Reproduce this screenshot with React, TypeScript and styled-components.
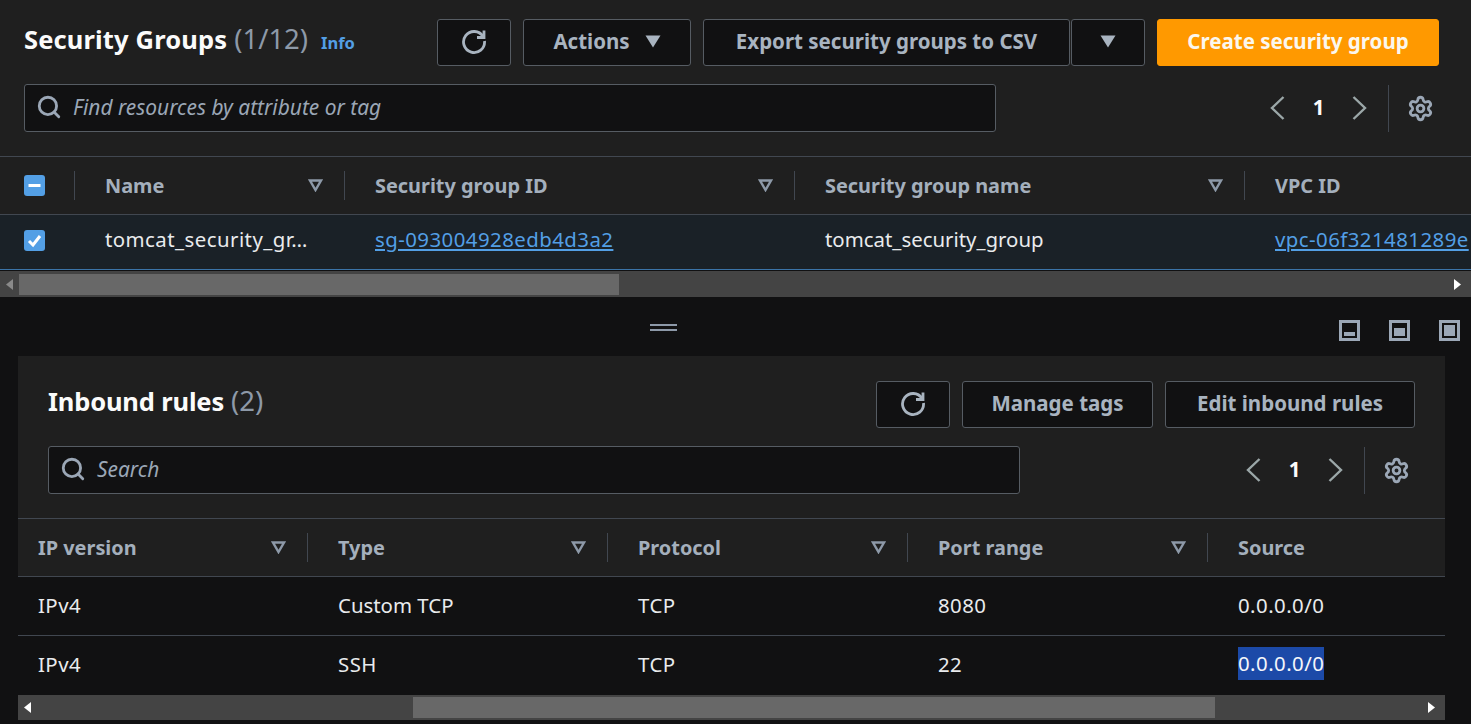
import React from 'react'
import styled, { createGlobalStyle } from 'styled-components'
import { Search, Settings } from 'lucide-react'

const GlobalStyle = createGlobalStyle`
  html, body {
    margin: 0;
    padding: 0;
    background: #111112;
    font-family: "Noto Sans", "Open Sans", sans-serif;
  }
  * { box-sizing: border-box; }
`

const Page = styled.div`
  width: 1471px;
  height: 724px;
  overflow: hidden;
  background: #111112;
`

const HeaderPanel = styled.div<{ $pad: number }>`
  background: #1f1f1f;
  padding: ${(p) => (p.$pad === 24 ? '19px 32px 24px 24px' : '25px 30px 24px 30px')};
`

const TitleRow = styled.div`
  display: flex;
  align-items: center;
  height: 47px;
`

const Title = styled.h1<{ $track: number }>`
  margin: 0 0 8px;
  font-size: 25.5px;
  line-height: 32px;
  font-weight: 700;
  letter-spacing: ${(p) => p.$track}px;
  color: #fbfbfb;
  white-space: nowrap;
`

const Count = styled.span`
  font-size: 27.5px;
  font-weight: 400;
  letter-spacing: 0;
  color: #8d99a8;
  margin-left: 7px;
`

const InfoLink = styled.a`
  margin-left: 13px;
  margin-bottom: 1px;
  font-size: 16.5px;
  font-weight: 700;
  color: #539fe5;
`

const Actions = styled.div`
  margin-left: auto;
  display: flex;
  align-items: center;
  gap: 12px;
`

const Button = styled.button<{ $w: number }>`
  width: ${(p) => p.$w}px;
  height: 47px;
  display: flex;
  align-items: center;
  justify-content: center;
  gap: 15px;
  background: #111112;
  border: 1px solid #565c63;
  border-radius: 3px;
  color: #a9b4c0;
  font-family: inherit;
  font-size: 20.5px;
  font-weight: 700;
  padding: 0 0 3px;
`

const PrimaryButton = styled(Button)`
  background: #ff9900;
  border-color: #ff9900;
  color: #fbf7ee;
`

const SplitGroup = styled.div`
  display: flex;
  gap: 1px;
`

const FilterRow = styled.div`
  display: flex;
  align-items: center;
  margin-top: 18px;
  height: 48px;
`

const SearchBox = styled.div`
  width: 972px;
  height: 48px;
  display: flex;
  align-items: center;
  gap: 11px;
  padding: 0 0 2px 11px;
  background: #111112;
  border: 1px solid #565c63;
  border-radius: 3px;
  color: #9ba7b6;
  font-size: 20.9px;
  font-style: italic;
`

const Pager = styled.div`
  margin-left: auto;
  display: flex;
  align-items: center;
  height: 47px;
`

const PageNumber = styled.span`
  width: 55px;
  padding-bottom: 3px;
  text-align: center;
  color: #fbfbfb;
  font-size: 20.5px;
  font-weight: 700;
`

const PagerArrow = styled.svg`
  width: 28px;
  height: 28px;
  fill: none;
  stroke: #9ba7a8;
  stroke-width: 2.4;
`

const PagerDivider = styled.div`
  width: 1px;
  height: 47px;
  background: #414750;
  margin: 0 18px 0 14px;
`

const GearWrap = styled.span`
  display: flex;
  color: #9ba7b6;
  margin-right: 5px;
`

const Row = styled.div<{ $h: number; $bg: string; $under?: string; $lift?: number }>`
  display: flex;
  align-items: center;
  height: ${(p) => p.$h}px;
  background: ${(p) => p.$bg};
  border-top: 1px solid #414750;
  border-bottom: ${(p) => (p.$under ? `1px solid ${p.$under}` : 'none')};
  padding-bottom: ${(p) => p.$lift ?? 0}px;
  overflow: hidden;
`

const Cell = styled.div<{ $w: number; $pad?: number; $wide?: boolean }>`
  flex: 0 0 ${(p) => p.$w}px;
  display: flex;
  align-items: center;
  padding-left: ${(p) => p.$pad ?? 30}px;
  height: 100%;
  font-size: 20.4px;
  letter-spacing: ${(p) => (p.$wide ? '0.45px' : '0')};
  color: #e9ebed;
  white-space: nowrap;
`

const HeadCell = styled(Cell)`
  position: relative;
  color: #a4afbc;
  font-size: 19.9px;
  font-weight: 700;
  padding-right: 22px;
  justify-content: space-between;
  &::after {
    content: '';
    position: absolute;
    right: 0;
    top: 14px;
    bottom: 14px;
    width: 1px;
    background: #414750;
  }
`

const LastHeadCell = styled(Cell)`
  color: #a4afbc;
  font-size: 19.9px;
  font-weight: 700;
`

const TableLink = styled.a`
  color: #539fe5;
  text-decoration: underline;
`

const Highlight = styled.span`
  background: #1c4aa8;
  color: #f4f6fb;
  line-height: 33px;
`

const CheckBox = styled.span<{ $drop?: number }>`
  width: 21px;
  height: 21px;
  display: flex;
  align-items: center;
  justify-content: center;
  margin-top: ${(p) => p.$drop ?? 0}px;
  background: #539fe5;
  border-radius: 3px;
`

const Scrollbar = styled.div<{ $h: number; $gap?: number }>`
  display: flex;
  height: ${(p) => p.$h}px;
  margin-top: ${(p) => p.$gap ?? 0}px;
  background: #444444;
  align-items: center;
`

const Thumb = styled.div<{ $w: number; $ml: number }>`
  width: ${(p) => p.$w}px;
  height: 21px;
  margin-left: ${(p) => p.$ml}px;
  background: #686868;
`

const ScrollArrow = styled.span<{ $dim?: boolean }>`
  display: flex;
  width: 19px;
  justify-content: center;
  color: ${(p) => (p.$dim ? '#8a8a8a' : '#ffffff')};
`

const ScrollEnd = styled.span`
  display: flex;
  margin-left: auto;
  width: 27px;
  justify-content: center;
`

const SplitBar = styled.div`
  display: flex;
  align-items: center;
  height: 59px;
  padding: 0 11px 0 650px;
`

const Handle = styled.div`
  width: 27px;
  height: 7px;
  margin-top: 2px;
  border-top: 2px solid #8d99a8;
  border-bottom: 2px solid #8d99a8;
`

const SplitIcons = styled.div`
  margin-left: auto;
  display: flex;
  gap: 29px;
  margin-top: 8px;
`

const SplitIcon = styled.span<{ $fill: number }>`
  display: flex;
  align-items: flex-end;
  width: 21px;
  height: 21px;
  border: 3px solid #9ba7b6;
  background: #111112;
  padding: 2px;
  & > i {
    display: block;
    width: 100%;
    height: ${(p) => p.$fill}%;
    background: #9ba7b6;
  }
`

const DetailPanel = styled.div`
  width: 1427px;
  margin-left: 18px;
`

const Refresh = () => (
  <svg width="28" height="28" viewBox="0 0 28 28" fill="none" stroke="#a9b4c0" strokeWidth="2.8">
    <path d="M23 9.500A10.500 10.500 0 1 0 24.500 14" />
    <path d="M24 3.500v7h-7" />
  </svg>
)

const Caret = () => (
  <svg width="16" height="13" viewBox="0 0 16 13">
    <path d="M0.500 0.500h15L8 12.500z" fill="#a9b4c0" />
  </svg>
)

const SortIcon = () => (
  <svg width="15" height="13" viewBox="0 0 15 13" fill="none" stroke="#8d99a8" strokeWidth="2.4">
    <path d="M2 1.500h11L7.500 11z" />
  </svg>
)

const SmallArrow = ({ dir }: { dir: 'left' | 'right' }) => (
  <svg width="7" height="11" viewBox="0 0 7 11" fill="currentColor">
    <path d={dir === 'left' ? 'M7 0v11L0 5.500z' : 'M0 0v11l7-5.500z'} />
  </svg>
)

function PagerBlock() {
  return (
    <Pager>
      <PagerArrow viewBox="0 0 28 28"><path d="M20.500 3L9 14l11.500 11" /></PagerArrow>
      <PageNumber>1</PageNumber>
      <PagerArrow viewBox="0 0 28 28"><path d="M7.500 3L19 14 7.500 25" /></PagerArrow>
      <PagerDivider />
      <GearWrap><Settings size={27} strokeWidth={2.5} /></GearWrap>
    </Pager>
  )
}

export default function App() {
  return (
    <Page>
      <GlobalStyle />
      <HeaderPanel $pad={24}>
        <TitleRow>
          <Title $track={0.14}>Security Groups<Count>(1/12)</Count></Title>
          <InfoLink>Info</InfoLink>
          <Actions>
            <Button $w={74}><Refresh /></Button>
            <Button $w={168}>Actions <Caret /></Button>
            <SplitGroup>
              <Button $w={367}>Export security groups to CSV</Button>
              <Button $w={74}><Caret /></Button>
            </SplitGroup>
            <PrimaryButton $w={282}>Create security group</PrimaryButton>
          </Actions>
        </TitleRow>
        <FilterRow>
          <SearchBox>
            <Search size={26} strokeWidth={2.6} />
            Find resources by attribute or tag
          </SearchBox>
          <PagerBlock />
        </FilterRow>
      </HeaderPanel>

      <Row $h={58} $bg="#1f1f1f">
        <HeadCell $w={75} $pad={24}>
          <CheckBox>
            <svg width="15" height="15" viewBox="0 0 15 15"><path d="M1.500 7.500h12" stroke="#fff" strokeWidth="3" /></svg>
          </CheckBox>
        </HeadCell>
        <HeadCell $w={270}>Name <SortIcon /></HeadCell>
        <HeadCell $w={450}>Security group ID <SortIcon /></HeadCell>
        <HeadCell $w={450}>Security group name <SortIcon /></HeadCell>
        <LastHeadCell $w={226}>VPC ID</LastHeadCell>
      </Row>
      <Row $h={56} $bg="#1a2127" $under="#3b74a8" $lift={7}>
        <Cell $w={75} $pad={24}>
          <CheckBox $drop={4}>
            <svg width="17" height="17" viewBox="0 0 17 17" fill="none"><path d="M3 9l4 4 7-9" stroke="#fff" strokeWidth="3" /></svg>
          </CheckBox>
        </Cell>
        <Cell $w={270} $wide>tomcat_security_gr…</Cell>
        <Cell $w={450} $wide><TableLink>sg-093004928edb4d3a2</TableLink></Cell>
        <Cell $w={450}>tomcat_security_group</Cell>
        <Cell $w={226} $wide><TableLink>vpc-06f321481289e</TableLink></Cell>
      </Row>
      <Scrollbar $h={26} $gap={1}>
        <ScrollArrow $dim><SmallArrow dir="left" /></ScrollArrow>
        <Thumb $w={600} $ml={0} />
        <ScrollEnd><ScrollArrow><SmallArrow dir="right" /></ScrollArrow></ScrollEnd>
      </Scrollbar>

      <SplitBar>
        <Handle />
        <SplitIcons>
          <SplitIcon $fill={40}><i /></SplitIcon>
          <SplitIcon $fill={70}><i /></SplitIcon>
          <SplitIcon $fill={100}><i /></SplitIcon>
        </SplitIcons>
      </SplitBar>

      <DetailPanel>
        <HeaderPanel $pad={30}>
          <TitleRow>
            <Title $track={-0.15}>Inbound rules<Count>(2)</Count></Title>
            <Actions>
              <Button $w={74}><Refresh /></Button>
              <Button $w={191}>Manage tags</Button>
              <Button $w={250}>Edit inbound rules</Button>
            </Actions>
          </TitleRow>
          <FilterRow>
            <SearchBox>
              <Search size={26} strokeWidth={2.6} />
              Search
            </SearchBox>
            <PagerBlock />
          </FilterRow>
        </HeaderPanel>
        <Row $h={58} $bg="#1f1f1f">
          <HeadCell $w={290} $pad={20}>IP version <SortIcon /></HeadCell>
          <HeadCell $w={300}>Type <SortIcon /></HeadCell>
          <HeadCell $w={300}>Protocol <SortIcon /></HeadCell>
          <HeadCell $w={300}>Port range <SortIcon /></HeadCell>
          <LastHeadCell $w={237}>Source</LastHeadCell>
        </Row>
        <Row $h={59} $bg="#111112" $lift={2}>
          <Cell $w={290} $pad={20} $wide>IPv4</Cell>
          <Cell $w={300}>Custom TCP</Cell>
          <Cell $w={300} $wide>TCP</Cell>
          <Cell $w={300} $wide>8080</Cell>
          <Cell $w={237} $wide>0.0.0.0/0</Cell>
        </Row>
        <Row $h={60} $bg="#111112" $lift={4}>
          <Cell $w={290} $pad={20} $wide>IPv4</Cell>
          <Cell $w={300} $wide>SSH</Cell>
          <Cell $w={300} $wide>TCP</Cell>
          <Cell $w={300} $wide>22</Cell>
          <Cell $w={237} $wide><Highlight>0.0.0.0/0</Highlight></Cell>
        </Row>
        <Scrollbar $h={25}>
          <ScrollArrow><SmallArrow dir="left" /></ScrollArrow>
          <Thumb $w={802} $ml={376} />
          <ScrollEnd><ScrollArrow><SmallArrow dir="right" /></ScrollArrow></ScrollEnd>
        </Scrollbar>
      </DetailPanel>
    </Page>
  )
}
